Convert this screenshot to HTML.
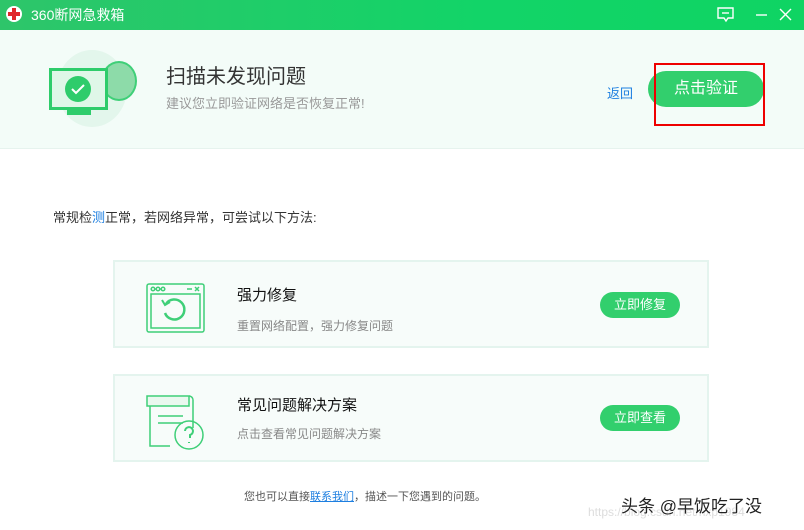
<!DOCTYPE html>
<html><head><meta charset="utf-8"><style>
*{margin:0;padding:0;box-sizing:border-box}
body{width:804px;height:530px;overflow:hidden;background:#fff;font-family:"Liberation Sans","Noto Sans CJK SC",sans-serif;position:relative}
.a{position:absolute}
.top{left:0;top:0;width:804px;height:30px;background:linear-gradient(90deg,#2ec56a,#12d468 60%,#0fd463)}
.hdr{left:0;top:30px;width:804px;height:119px;background:#f3fcf8;border-bottom:1px solid #e6f3ee}
.card{left:113px;width:596px;height:88px;background:#f7fcfa;border:2px solid #e4f4ee}
.btn{background:#32cf6d;color:#fff;border-radius:13px;width:80px;height:26px;font-size:13px;text-align:center;line-height:26px}
.t{font-size:15px;color:#111}
.s{font-size:12px;color:#888}
</style></head><body>
<div class="a top"></div>
<div class="a" style="left:6px;top:6px;width:16px;height:16px;border-radius:50%;background:#fff"></div>
<div class="a" style="left:12px;top:8px;width:4px;height:12px;background:#e0262a"></div>
<div class="a" style="left:8px;top:12px;width:12px;height:4px;background:#e0262a"></div>
<div class="a" style="left:31px;top:5px;color:#fff;font-size:14px">360断网急救箱</div>
<svg class="a" style="left:716px;top:6px" width="80" height="18" fill="none" stroke="#fff" stroke-width="1.4"><path d="M2 2h15v10h-5l-2 3-2-3H2z"/><path d="M6 7h7"/><path d="M40 9h11"/><path d="M64 3l11 11M75 3L64 14"/></svg>
<div class="a hdr"></div>
<div class="a" style="left:57px;top:50px;width:70px;height:77px;border-radius:50%;background:#e3f6ec"></div>
<div class="a" style="left:101px;top:61px;width:36px;height:40px;border-radius:50%;background:#8ddba9;border:2px solid #3fcf78"></div>
<div class="a" style="left:49px;top:68px;width:59px;height:42px;background:#dff7e8;border:3px solid #2ecc6b"></div>
<div class="a" style="left:65px;top:76px;width:26px;height:26px;border-radius:50%;background:#2ecc6b"></div>
<svg class="a" style="left:70px;top:82px" width="16" height="14"><path d="M2 7l4 4 8-8" stroke="#fff" stroke-width="2" fill="none"/></svg>
<div class="a" style="left:67px;top:110px;width:24px;height:5px;background:#2ecc6b"></div>
<div class="a" style="left:166px;top:60px;font-size:20px;color:#333">扫描未发现问题</div>
<div class="a" style="left:166px;top:93px;font-size:13px;color:#999">建议您立即验证网络是否恢复正常!</div>
<div class="a" style="left:607px;top:83px;font-size:13px;color:#1e7fe0">返回</div>
<div class="a" style="left:648px;top:71px;width:116px;height:36px;border-radius:18px;background:#32cf6d;color:#fff;font-size:16px;text-align:center;line-height:36px">点击验证</div>
<div class="a" style="left:654px;top:63px;width:111px;height:63px;border:2px solid #e00"></div>
<div class="a" style="left:53px;top:207px;font-size:13px;color:#333">常规检<span style="color:#1e7fe0">测</span>正常，若网络异常，可尝试以下方法:</div>
<div class="a card" style="top:260px"></div>
<svg class="a" style="left:146px;top:283px" width="60" height="52" fill="none" stroke="#3fcf78" stroke-width="1.5"><rect x="1" y="1" width="57" height="48" rx="2"/><rect x="5" y="11" width="49" height="34"/><circle cx="7" cy="6" r="1.8"/><circle cx="12" cy="6" r="1.8"/><circle cx="17" cy="6" r="1.8"/><path d="M41 6h5M49 4l4 4M53 4l-4 4"/><path d="M20 21a10 10 0 1 1-1 9" stroke-width="2.5"/><path d="M16 17l3 5 5-3" stroke-width="2"/></svg>
<div class="a t" style="left:237px;top:284px">强力修复</div>
<div class="a s" style="left:237px;top:317px">重置网络配置，强力修复问题</div>
<div class="a btn" style="left:600px;top:292px">立即修复</div>
<div class="a card" style="top:374px"></div>
<svg class="a" style="left:145px;top:393px" width="62" height="58" fill="none" stroke="#3fcf78" stroke-width="1.5"><path d="M2 3h42v10H2z" fill="#eaf8ef"/><path d="M44 3a4 4 0 0 1 4 4v28"/><path d="M5 13v40h20"/><path d="M13 23h25M13 30h25"/><circle cx="44" cy="42" r="14"/><path d="M40 38a4 4 0 1 1 5 4v3M44 49v1" stroke-width="2"/></svg>
<div class="a t" style="left:237px;top:394px">常见问题解决方案</div>
<div class="a s" style="left:237px;top:425px">点击查看常见问题解决方案</div>
<div class="a btn" style="left:600px;top:405px">立即查看</div>
<div class="a" style="left:244px;top:488px;font-size:11px;color:#555">您也可以直接<span style="color:#1e7fe0;text-decoration:underline">联系我们</span>，描述一下您遇到的问题。</div>
<div class="a" style="left:588px;top:505px;font-size:12px;color:#ddd">https://blog.csdn.net/hxp1984</div>
<div class="a" style="left:621px;top:492px;font-size:17px;color:#222;text-shadow:0 0 2px #fff">头条 @早饭吃了没</div>
</body></html>
